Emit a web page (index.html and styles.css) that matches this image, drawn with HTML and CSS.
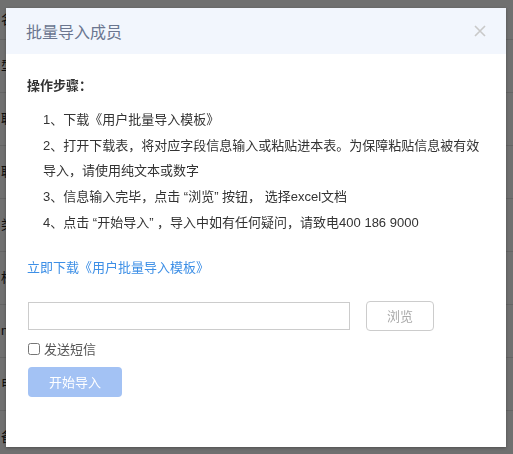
FILE: index.html
```html
<!DOCTYPE html>
<html lang="zh-CN">
<head>
    <meta charset="UTF-8">
    <meta name="viewport" content="width=device-width, initial-scale=1.0">
    <title>批量导入成员</title>
    <link rel="stylesheet" href="styles.css">
</head>
<body>
<!-- Página de fondo -->
<div class="page">
    <div class="row">名称</div>
    <div class="row">型号</div>
    <div class="row">联系</div>
    <div class="row">联系</div>
    <div class="row">类型</div>
    <div class="row">标签</div>
    <div class="row">nm</div>
    <div class="row">电话</div>
    <div class="row">备注</div>
</div>

<div class="mask"></div>

<!-- Modal de importación -->
<div class="modal">
    <div class="modal-header">
        <span class="modal-title">批量导入成员</span>
        <svg class="close" width="12" height="12" viewBox="0 0 12 12">
            <path d="M1 1L11 11M11 1L1 11" stroke="#c9c9c9" stroke-width="1.6" fill="none"/>
        </svg>
    </div>
    <div class="modal-body">
        <div class="steps-title">操作步骤：</div>
        <ul class="steps">
            <li>1、下载《用户批量导入模板》</li>
            <li>2、打开下载表，将对应字段信息输入或粘贴进本表。为保障粘贴信息被有效导入，请使用纯文本或数字</li>
            <li>3、信息输入完毕，点击 “浏览” 按钮， 选择excel文档</li>
            <li>4、点击 “开始导入” ，导入中如有任何疑问，请致电400 186 9000</li>
        </ul>
        <a class="download" href="#">立即下载《用户批量导入模板》</a>
        <div class="file-row">
            <input type="text" class="file-input">
            <button class="btn-browse">浏览</button>
        </div>
        <label class="sms">
            <input type="checkbox">
            <span>发送短信</span>
        </label>
        <button class="btn-start">开始导入</button>
    </div>
</div>
</body>
</html>
```

FILE: styles.css
```css
body {
    margin: 0;
    font-family: "Liberation Sans", "Noto Sans CJK SC", sans-serif;
    background: #fff;
    width: 513px;
    height: 454px;
    overflow: hidden;
}
.row {
    height: 52px;
    line-height: 52px;
    border-bottom: 1px solid #e4e4e4;
    padding-left: 1px;
    font-size: 13px;
    color: #222;
}
.row:first-child {
    height: 39px;
    line-height: 39px;
}
.mask {
    position: fixed;
    top: 0;
    left: 0;
    right: 0;
    bottom: 0;
    background: rgba(0, 0, 0, 0.56);
}
.modal {
    position: absolute;
    top: 8px;
    left: 6px;
    width: 500px;
    height: 439px;
    background: #fff;
    box-shadow: 0 1px 3px rgba(0, 0, 0, 0.3);
}
.modal-header {
    height: 46px;
    background: #f2f6fd;
    display: flex;
    align-items: center;
    justify-content: space-between;
    padding: 0 20px;
}
.modal-title {
    font-size: 16px;
    color: #6b7690;
}
.modal-body {
    padding: 19px 21px 0 21px;
}
.steps-title {
    font-size: 13px;
    font-weight: bold;
    color: #333;
    line-height: 26px;
}
.steps {
    list-style: none;
    margin: 8px 0 0 16px;
    padding: 0;
    font-size: 13px;
    line-height: 25.7px;
    color: #333;
}
.download {
    display: block;
    margin-top: 22px;
    font-size: 13px;
    line-height: 20px;
    color: #3d8fe6;
    text-decoration: none;
}
.file-row {
    display: flex;
    align-items: center;
    margin-top: 23px;
}
.file-input {
    width: 322px;
    height: 28px;
    box-sizing: border-box;
    margin: 0 0 0 1px;
    border: 1px solid #ccc;
    padding: 0 6px;
}
.btn-browse {
    margin-left: 16px;
    width: 68px;
    height: 30px;
    background: #fff;
    border: 1px solid #ccc;
    border-radius: 4px;
    color: #aaa;
    font-family: inherit;
    font-size: 13px;
}
.sms {
    display: flex;
    align-items: center;
    gap: 4px;
    margin-top: 8px;
    height: 20px;
    font-size: 13px;
    color: #555;
}
.sms input {
    margin: 0 0 0 1px;
    width: 12px;
    height: 12px;
}
.btn-start {
    display: block;
    margin: 8px 0 0 1px;
    width: 94px;
    height: 30px;
    border: none;
    border-radius: 4px;
    background: #a3c2f4;
    color: #fff;
    font-family: inherit;
    font-size: 13px;
}
```
